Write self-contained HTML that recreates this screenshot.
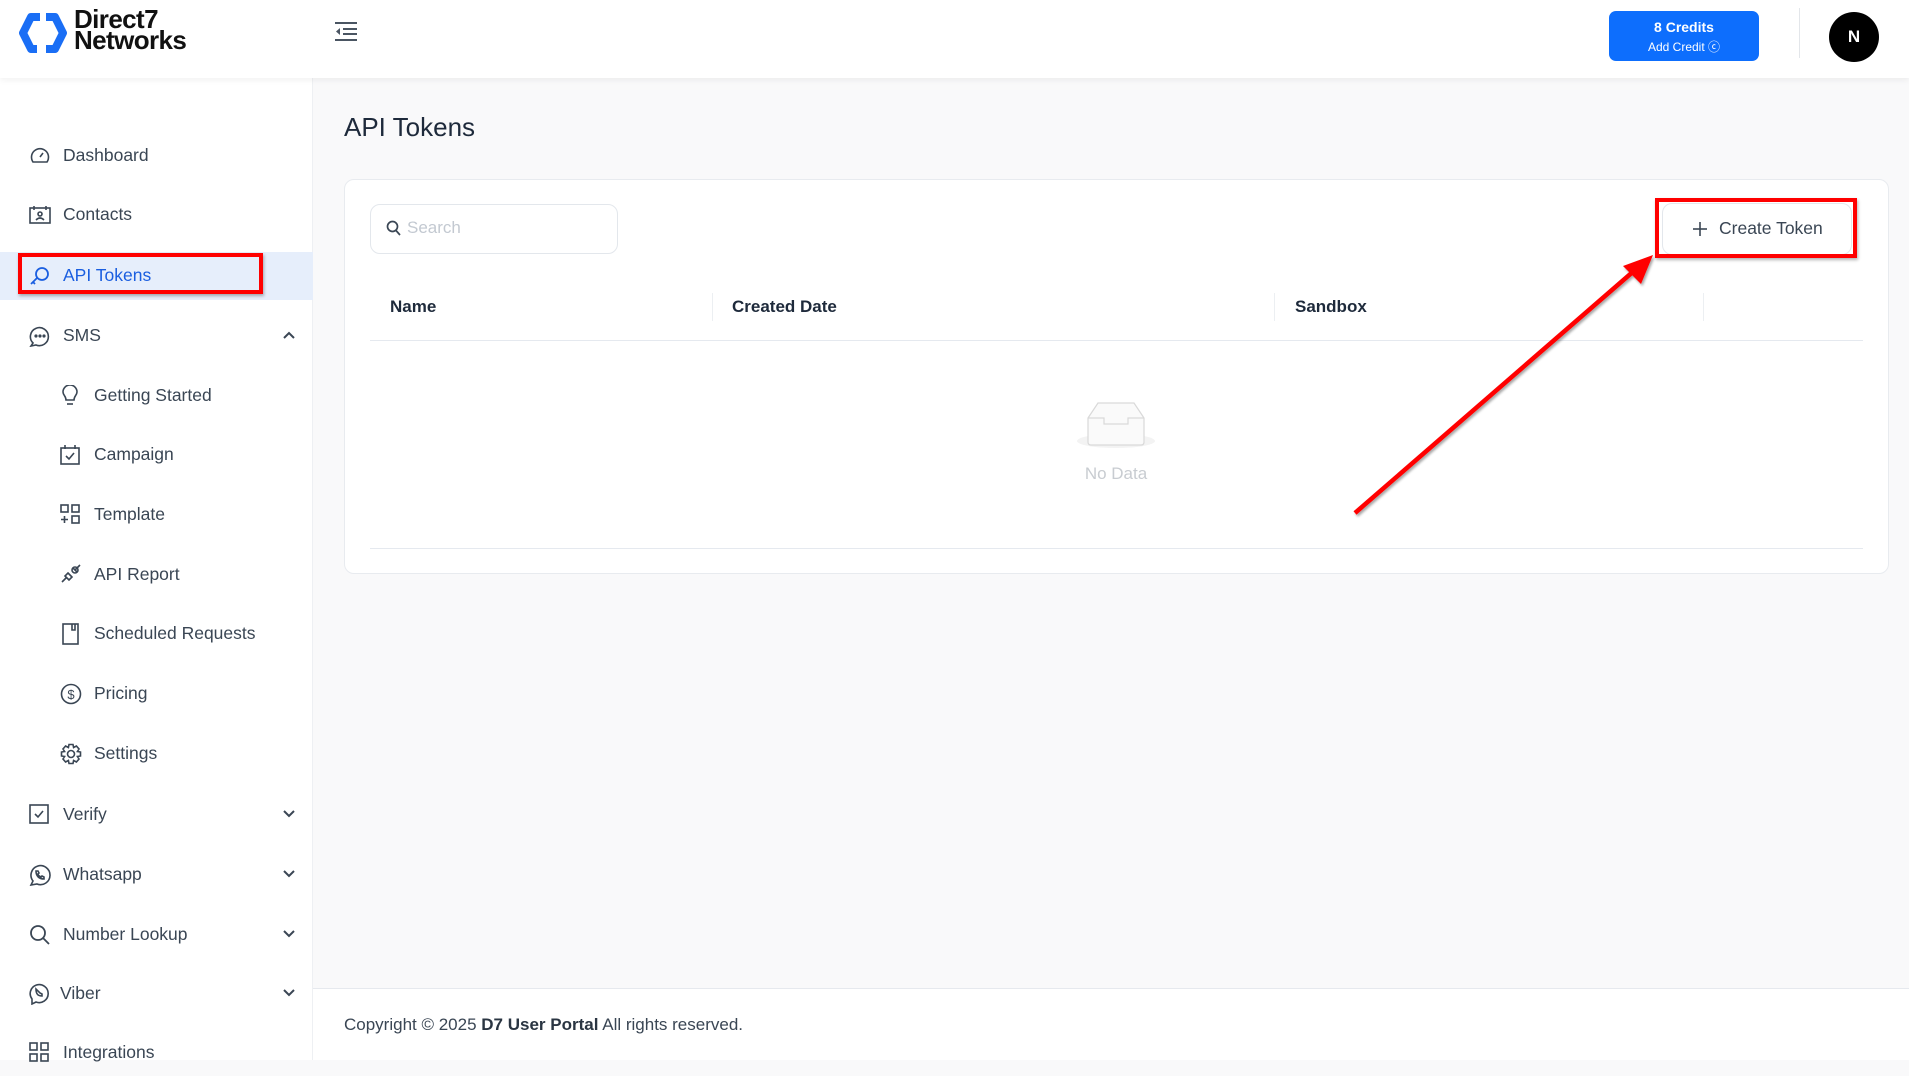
<!DOCTYPE html>
<html><head><meta charset="utf-8">
<style>
*{box-sizing:border-box;margin:0;padding:0}
body{width:1909px;height:1060px;overflow:hidden;background:#f9f9fa;font-family:"Liberation Sans",sans-serif;color:#3a4654;position:relative}
.header{position:absolute;left:0;top:0;width:1909px;height:78px;background:#fff;box-shadow:0 2px 6px rgba(0,0,0,.06);z-index:3}
.side{position:absolute;left:0;top:78px;width:313px;height:982px;background:#fff;border-right:1px solid #eef0f3}
.item{position:absolute;left:0;width:313px;height:48px;display:flex;align-items:center;font-size:17.5px;color:#3a4654}
.item svg{position:absolute;left:29px;top:14px}
.item span{position:absolute;left:63px}
.sub svg{left:60px}.sub span{left:94px}
.item .chev{position:absolute;left:283px;top:20px}
.abs{position:absolute}
</style></head><body>
<div class="header">
  <svg class="abs" style="left:19px;top:12px" width="48" height="42" viewBox="0 0 48 42">
    <path d="M21 5 H12 L4 21 L12 37 H18" fill="none" stroke="#1a6ef5" stroke-width="8" stroke-linejoin="round"/>
    <path d="M27 5 H36 L44 21 L36 37 H27" fill="none" stroke="#1a6ef5" stroke-width="8" stroke-linejoin="round"/>
  </svg>
  <div class="abs" style="left:74px;top:9px;font-size:26px;font-weight:bold;line-height:21px;color:#111;letter-spacing:-0.6px">Direct7<br>Networks</div>
  <svg class="abs" style="left:334px;top:21px" width="24" height="20" viewBox="0 0 24 20"><g stroke="#4a5562" stroke-width="2"><line x1="1" y1="2" x2="23" y2="2"/><line x1="9" y1="8" x2="23" y2="8"/><line x1="9" y1="13" x2="23" y2="13"/><line x1="1" y1="19" x2="23" y2="19"/></g><path d="M6 7 L2 10.5 L6 14Z" fill="#4a5562"/></svg>
  <div class="abs" style="left:1609px;top:11px;width:150px;height:50px;background:#0d6efd;border-radius:7px;color:#fff;text-align:center">
    <div style="font-size:14px;font-weight:bold;margin-top:8px">8 Credits</div>
    <div style="font-size:12px;margin-top:3px">Add Credit &#9426;</div>
  </div>
  <div class="abs" style="left:1799px;top:8px;width:1px;height:50px;background:#e3e6ea"></div>
  <div class="abs" style="left:1829px;top:12px;width:50px;height:50px;border-radius:50%;background:#000;color:#fff;font-weight:bold;font-size:17px;text-align:center;line-height:50px">N</div>
</div>

<div class="side">
  <div class="item" style="top:53px"><svg width="22" height="22" viewBox="0 0 22 22" fill="none" stroke="#3a4654" stroke-width="1.6"><path d="M4 17 A8.5 8.5 0 1 1 18 17 Z"/><line x1="11" y1="12" x2="14" y2="8"/></svg><span>Dashboard</span></div>
  <div class="item" style="top:112px"><svg width="22" height="22" viewBox="0 0 22 22" fill="none" stroke="#3a4654" stroke-width="1.6"><rect x="1" y="4" width="20" height="15"/><line x1="5" y1="2" x2="5" y2="6"/><line x1="17" y1="2" x2="17" y2="6"/><circle cx="11" cy="10" r="2"/><path d="M7 16 Q11 12 15 16"/></svg><span>Contacts</span></div>
  <div class="abs" style="left:0;top:174px;width:313px;height:48px;background:#e6eefb"></div>
  <div class="abs" style="left:18px;top:175px;width:245px;height:41px;border:4px solid #f00;box-shadow:1px 2px 3px rgba(0,0,0,.3)"></div>
  <div class="item" style="top:173px;color:#1a5ee0"><svg width="22" height="22" viewBox="0 0 22 22" fill="none" stroke="#1a5ee0" stroke-width="1.8"><circle cx="13" cy="9" r="6"/><line x1="8" y1="13" x2="2" y2="19"/><line x1="4" y1="17" x2="6" y2="19"/></svg><span>API Tokens</span></div>
  <div class="item" style="top:233px"><svg width="22" height="22" viewBox="0 0 22 22" fill="none" stroke="#3a4654" stroke-width="1.6"><path d="M4 18 A9 9 0 1 1 7 20 L2 21 Z"/><circle cx="7" cy="11" r=".8" fill="#3a4654"/><circle cx="11" cy="11" r=".8" fill="#3a4654"/><circle cx="15" cy="11" r=".8" fill="#3a4654"/></svg><span>SMS</span><svg class="chev" width="12" height="8" viewBox="0 0 12 8"><path d="M1 7 L6 2 L11 7" fill="none" stroke="#3a4654" stroke-width="2"/></svg></div>
  <div class="item sub" style="top:293px"><svg width="20" height="22" viewBox="0 0 20 22" fill="none" stroke="#3a4654" stroke-width="1.6"><path d="M6 15 C6 11 3 10 3 7 A7 7 0 0 1 17 7 C17 10 14 11 14 15 Z"/><line x1="7" y1="19" x2="13" y2="19"/></svg><span>Getting Started</span></div>
  <div class="item sub" style="top:352px"><svg width="20" height="22" viewBox="0 0 20 22" fill="none" stroke="#3a4654" stroke-width="1.6"><rect x="1" y="4" width="18" height="16"/><line x1="5" y1="1" x2="5" y2="5"/><line x1="15" y1="1" x2="15" y2="5"/><path d="M6 12 L9 15 L14 9"/></svg><span>Campaign</span></div>
  <div class="item sub" style="top:412px"><svg width="20" height="20" viewBox="0 0 20 20" fill="none" stroke="#3a4654" stroke-width="1.6"><rect x="1" y="1" width="7" height="7"/><rect x="12" y="1" width="7" height="7"/><rect x="12" y="12" width="7" height="7"/><path d="M1 15.5 H8 M4.5 12 V19"/></svg><span>Template</span></div>
  <div class="item sub" style="top:472px"><svg width="22" height="20" viewBox="0 0 22 20" fill="none" stroke="#3a4654" stroke-width="1.6"><path d="M2 18 L7 13 M8 9 L12 13 L9 16 L5 12 Z M13 4 L17 8 M15 6 L20 1"/><circle cx="15" cy="6" r="3"/></svg><span>API Report</span></div>
  <div class="item sub" style="top:531px"><svg width="20" height="22" viewBox="0 0 20 22" fill="none" stroke="#3a4654" stroke-width="1.6"><rect x="3" y="1" width="15" height="20"/><path d="M12 1 V7 L15 7 V1"/></svg><span>Scheduled Requests</span></div>
  <div class="item sub" style="top:591px"><svg width="22" height="22" viewBox="0 0 22 22" fill="none" stroke="#3a4654" stroke-width="1.6"><circle cx="11" cy="11" r="9.5"/><text x="11" y="16" font-size="13" text-anchor="middle" fill="#3a4654" stroke="none" font-family="Liberation Sans">$</text></svg><span>Pricing</span></div>
  <div class="item sub" style="top:651px"><svg width="22" height="22" viewBox="0 0 22 22" fill="none" stroke="#3a4654" stroke-width="1.6"><circle cx="11" cy="11" r="3.5"/><path d="M9 1.5 H13 L13.6 4.5 L16.4 3 L19 6 L17.4 8.5 L20.5 9 V13 L17.4 13.5 L19 16 L16.4 19 L13.6 17.5 L13 20.5 H9 L8.4 17.5 L5.6 19 L3 16 L4.6 13.5 L1.5 13 V9 L4.6 8.5 L3 6 L5.6 3 L8.4 4.5 Z"/></svg><span>Settings</span></div>
  <div class="item" style="top:712px"><svg width="20" height="20" viewBox="0 0 20 20" fill="none" stroke="#3a4654" stroke-width="1.6"><rect x="1" y="1" width="18" height="18"/><path d="M6 10 L9 13 L14 7"/></svg><span>Verify</span><svg class="chev" width="12" height="8" viewBox="0 0 12 8"><path d="M1 1 L6 6 L11 1" fill="none" stroke="#3a4654" stroke-width="2"/></svg></div>
  <div class="item" style="top:772px"><svg width="22" height="22" viewBox="0 0 22 22" fill="none" stroke="#3a4654" stroke-width="1.6"><path d="M4 17 A9.5 9.5 0 1 1 8 20 L2 21 Z"/><path d="M7 7 C7 12 10 15 15 15 L15 13 L13 12 L12 13 C10 12 9 11 9 10 L10 9 L9 7 Z"/></svg><span>Whatsapp</span><svg class="chev" width="12" height="8" viewBox="0 0 12 8"><path d="M1 1 L6 6 L11 1" fill="none" stroke="#3a4654" stroke-width="2"/></svg></div>
  <div class="item" style="top:832px"><svg width="22" height="22" viewBox="0 0 22 22" fill="none" stroke="#3a4654" stroke-width="1.8"><circle cx="9" cy="9" r="7"/><line x1="14" y1="14" x2="20" y2="20"/></svg><span>Number Lookup</span><svg class="chev" width="12" height="8" viewBox="0 0 12 8"><path d="M1 1 L6 6 L11 1" fill="none" stroke="#3a4654" stroke-width="2"/></svg></div>
  <div class="item" style="top:891px"><svg width="20" height="22" viewBox="0 0 20 22" fill="none" stroke="#3a4654" stroke-width="1.6"><path d="M3 16 A9 9 0 1 1 7 19 L3 21 Z"/><path d="M7 6 C7 11 9 13 13 13 L13 11 L11 10 Z"/></svg><span style="left:60px">Viber</span><svg class="chev" width="12" height="8" viewBox="0 0 12 8"><path d="M1 1 L6 6 L11 1" fill="none" stroke="#3a4654" stroke-width="2"/></svg></div>
  <div class="item" style="top:950px"><svg width="20" height="20" viewBox="0 0 20 20" fill="none" stroke="#3a4654" stroke-width="1.6"><rect x="1" y="1" width="7" height="7"/><rect x="12" y="1" width="7" height="7"/><rect x="1" y="12" width="7" height="7"/><rect x="12" y="12" width="7" height="7"/></svg><span>Integrations</span></div>
</div>

<div class="abs" style="left:344px;top:112px;font-size:26px;color:#1e2a3b">API Tokens</div>

<div class="abs" style="left:344px;top:179px;width:1545px;height:395px;background:#fff;border:1px solid #e8ebef;border-radius:10px"></div>
<div class="abs" style="left:370px;top:204px;width:248px;height:50px;border:1px solid #e3e7ec;border-radius:10px;background:#fff"></div>
<svg class="abs" style="left:386px;top:220px" width="16" height="17" viewBox="0 0 16 17" fill="none" stroke="#3a4654" stroke-width="1.7"><circle cx="6.5" cy="6.5" r="5"/><line x1="10" y1="10.5" x2="14" y2="15"/></svg>
<div class="abs" style="left:407px;top:218px;font-size:17px;color:#c3c9d1">Search</div>

<div class="abs" style="left:1662px;top:203px;width:190px;height:52px;border:1px solid #e3e7ec;border-radius:10px;background:#fff"></div>
<div class="abs" style="left:1655px;top:198px;width:202px;height:60px;border:4px solid #f00;box-shadow:1px 2px 3px rgba(0,0,0,.3)"></div>
<svg class="abs" style="left:1692px;top:221px" width="16" height="16" viewBox="0 0 16 16" stroke="#3a4654" stroke-width="1.6"><line x1="8" y1="1" x2="8" y2="15"/><line x1="1" y1="8" x2="15" y2="8"/></svg>
<div class="abs" style="left:1719px;top:218px;font-size:17.5px;color:#3a4654">Create Token</div>

<div class="abs" style="left:390px;top:297px;font-size:17px;font-weight:bold;color:#1e2a3b">Name</div>
<div class="abs" style="left:712px;top:293px;width:1px;height:28px;background:#eceff2"></div>
<div class="abs" style="left:732px;top:297px;font-size:17px;font-weight:bold;color:#1e2a3b">Created Date</div>
<div class="abs" style="left:1274px;top:293px;width:1px;height:28px;background:#eceff2"></div>
<div class="abs" style="left:1295px;top:297px;font-size:17px;font-weight:bold;color:#1e2a3b">Sandbox</div>
<div class="abs" style="left:1703px;top:293px;width:1px;height:28px;background:#eceff2"></div>
<div class="abs" style="left:370px;top:340px;width:1493px;height:1px;background:#e5e9ef"></div>

<svg class="abs" style="left:1075px;top:400px" width="82" height="50" viewBox="0 0 82 50"><ellipse cx="41" cy="41" rx="39" ry="7" fill="#f3f3f3"/><path d="M13 18 L23 3 H59 L69 18 V42 Q69 45 66 45 H16 Q13 45 13 42 Z" fill="#fafafa" stroke="#d9d9d9" stroke-width="1.2"/><path d="M13 18 H29 V24 H53 V18 H69" fill="none" stroke="#d9d9d9" stroke-width="1.2"/></svg>
<div class="abs" style="left:1066px;top:464px;width:100px;text-align:center;font-size:17px;color:#c8ccd1">No Data</div>
<div class="abs" style="left:370px;top:548px;width:1493px;height:1px;background:#e5e9ef"></div>

<svg class="abs" style="left:0;top:0" width="1909" height="1060"><defs><filter id="s"><feDropShadow dx="1.5" dy="2" stdDeviation="1.2" flood-color="#000" flood-opacity=".35"/></filter></defs><g filter="url(#s)"><line x1="1355" y1="513" x2="1635" y2="270" stroke="#f00" stroke-width="4.5"/><path d="M1653 255 L1623 266 L1641 284 Z" fill="#f00"/></g></svg>

<div class="abs" style="left:313px;top:988px;width:1596px;height:72px;background:#fff;border-top:1px solid #e6e9ee"></div>
<div class="abs" style="left:344px;top:1015px;font-size:17px;color:#3a4654">Copyright © 2025 <span style="color:#2a3542;font-weight:600">D7 User Portal</span> All rights reserved.</div>
</body></html>
